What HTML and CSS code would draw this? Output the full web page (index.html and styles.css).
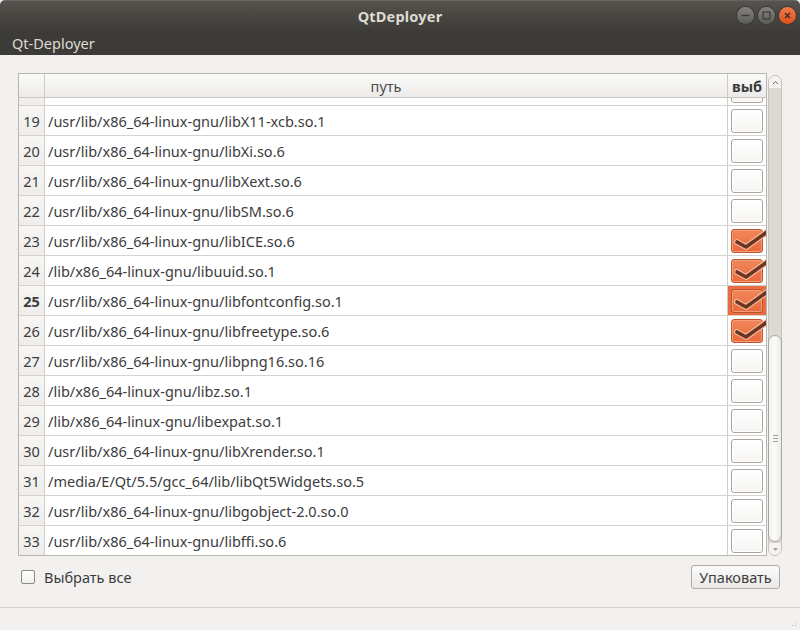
FILE: index.html
```html
<!DOCTYPE html>
<html lang="ru">
<head>
<meta charset="utf-8">
<title>QtDeployer</title>
<link rel="stylesheet" href="styles.css">
</head>
<body>
<div class="window">
  <div class="titlebar">
    <div></div>
    <div class="title">QtDeployer</div>
    <div class="wbtns">
      <span class="wbtn"><svg width="17" height="17" viewBox="0 0 17 17"><line x1="4.5" y1="8.5" x2="12.5" y2="8.5" stroke="#3a3935" stroke-width="1.3"/></svg></span>
      <span class="wbtn"><svg width="17" height="17" viewBox="0 0 17 17"><rect x="5" y="5" width="7" height="7" fill="none" stroke="#3a3935" stroke-width="1.2"/></svg></span>
      <span class="wbtn close"><svg width="17" height="17" viewBox="0 0 17 17"><path d="M6 6 L11 11 M11 6 L6 11" stroke="#3a2a22" stroke-width="1.3"/></svg></span>
    </div>
  </div>
  <div class="menubar">Qt-Deployer</div>
  <div class="main">
    <div class="table-area">
      <div class="tableview">
        <div class="hdr">
          <div class="hcorner"></div>
          <div class="hcell">путь</div>
          <div class="hcell bold">выб</div>
        </div>
        <div class="body">
          <div class="rows">
            <div class="row first"><div class="vh"></div><div class="path"></div><div class="chk"><span class="box"></span></div></div>
            <div class="row"><div class="vh">19</div><div class="path">/usr/lib/x86_64-linux-gnu/libX11-xcb.so.1</div><div class="chk"><span class="box"></span></div></div>
            <div class="row"><div class="vh">20</div><div class="path">/usr/lib/x86_64-linux-gnu/libXi.so.6</div><div class="chk"><span class="box"></span></div></div>
            <div class="row"><div class="vh">21</div><div class="path">/usr/lib/x86_64-linux-gnu/libXext.so.6</div><div class="chk"><span class="box"></span></div></div>
            <div class="row"><div class="vh">22</div><div class="path">/usr/lib/x86_64-linux-gnu/libSM.so.6</div><div class="chk"><span class="box"></span></div></div>
            <div class="row"><div class="vh">23</div><div class="path">/usr/lib/x86_64-linux-gnu/libICE.so.6</div><div class="chk"><span class="box on"><svg class="tick" width="40" height="26" viewBox="0 0 40 26"><path d="M6 13 L15 18 L36 3" fill="none" stroke="#f6b89c" stroke-width="6" stroke-linecap="round" stroke-linejoin="round"/><path d="M6 13 L15 18 L36 3" fill="none" stroke="#6c3522" stroke-width="3.6" stroke-linecap="round" stroke-linejoin="round"/></svg></span></div></div>
            <div class="row"><div class="vh">24</div><div class="path">/lib/x86_64-linux-gnu/libuuid.so.1</div><div class="chk"><span class="box on"><svg class="tick" width="40" height="26" viewBox="0 0 40 26"><path d="M6 13 L15 18 L36 3" fill="none" stroke="#f6b89c" stroke-width="6" stroke-linecap="round" stroke-linejoin="round"/><path d="M6 13 L15 18 L36 3" fill="none" stroke="#6c3522" stroke-width="3.6" stroke-linecap="round" stroke-linejoin="round"/></svg></span></div></div>
            <div class="row"><div class="vh cur">25</div><div class="path">/usr/lib/x86_64-linux-gnu/libfontconfig.so.1</div><div class="chk current"><span class="box on"><svg class="tick" width="40" height="26" viewBox="0 0 40 26"><path d="M6 13 L15 18 L36 3" fill="none" stroke="#f6b89c" stroke-width="6" stroke-linecap="round" stroke-linejoin="round"/><path d="M6 13 L15 18 L36 3" fill="none" stroke="#6c3522" stroke-width="3.6" stroke-linecap="round" stroke-linejoin="round"/></svg></span></div></div>
            <div class="row"><div class="vh">26</div><div class="path">/usr/lib/x86_64-linux-gnu/libfreetype.so.6</div><div class="chk"><span class="box on"><svg class="tick" width="40" height="26" viewBox="0 0 40 26"><path d="M6 13 L15 18 L36 3" fill="none" stroke="#f6b89c" stroke-width="6" stroke-linecap="round" stroke-linejoin="round"/><path d="M6 13 L15 18 L36 3" fill="none" stroke="#6c3522" stroke-width="3.6" stroke-linecap="round" stroke-linejoin="round"/></svg></span></div></div>
            <div class="row"><div class="vh">27</div><div class="path">/usr/lib/x86_64-linux-gnu/libpng16.so.16</div><div class="chk"><span class="box"></span></div></div>
            <div class="row"><div class="vh">28</div><div class="path">/lib/x86_64-linux-gnu/libz.so.1</div><div class="chk"><span class="box"></span></div></div>
            <div class="row"><div class="vh">29</div><div class="path">/lib/x86_64-linux-gnu/libexpat.so.1</div><div class="chk"><span class="box"></span></div></div>
            <div class="row"><div class="vh">30</div><div class="path">/usr/lib/x86_64-linux-gnu/libXrender.so.1</div><div class="chk"><span class="box"></span></div></div>
            <div class="row"><div class="vh">31</div><div class="path">/media/E/Qt/5.5/gcc_64/lib/libQt5Widgets.so.5</div><div class="chk"><span class="box"></span></div></div>
            <div class="row"><div class="vh">32</div><div class="path">/usr/lib/x86_64-linux-gnu/libgobject-2.0.so.0</div><div class="chk"><span class="box"></span></div></div>
            <div class="row"><div class="vh">33</div><div class="path">/usr/lib/x86_64-linux-gnu/libffi.so.6</div><div class="chk"><span class="box"></span></div></div>
          </div>
        </div>
      </div>
      <div class="scrollbar">
        <div class="arrow up"><svg width="7" height="5" viewBox="0 0 7 5"><path d="M1 4 L3.5 1.5 L6 4" fill="none" stroke="#6a6660" stroke-width="1"/></svg></div>
        <div class="trough">
          <div class="thumb"><span class="grip"></span></div>
        </div>
        <div class="arrow down"><svg width="7" height="5" viewBox="0 0 7 5"><path d="M1 1 L6 1 L3.5 4 Z" fill="#a8a49e"/></svg></div>
      </div>
    </div>
    <div class="bottom">
      <label class="selall"><span class="cb"></span><span>Выбрать все</span></label>
      <button class="pack">Упаковать</button>
    </div>
  </div>
  <div class="statusbar"><span class="grip-corner"></span></div>
</div>
</body>
</html>
```

FILE: styles.css
```css
* { box-sizing: border-box; }
html, body { margin: 0; padding: 0; }
body {
  width: 800px;
  height: 630px;
  overflow: hidden;
  background: #f2f1f0;
  font-family: "Noto Sans", "DejaVu Sans", sans-serif;
  font-size: 14.5px;
  color: #3c3c3c;
}
.window {
  display: flex;
  flex-direction: column;
  height: 630px;
}
.titlebar {
  height: 30px;
  background: linear-gradient(#56544f 0%, #4a4843 45%, #3e3d39 100%);
  border-top: 1px solid #67655f;
  border-radius: 5px 5px 0 0;
  display: grid;
  grid-template-columns: 1fr auto 1fr;
  align-items: center;
}
.title {
  color: #dfdbd2;
  font-weight: bold;
  font-size: 14.5px;
  letter-spacing: 0.2px;
}
.wbtns {
  display: flex;
  justify-content: flex-end;
  gap: 4px;
  padding-right: 4px;
}
.wbtn {
  width: 17px;
  height: 17px;
  border-radius: 50%;
  background: linear-gradient(#85837d, #5d5b56);
  box-shadow: 0 0 0 1px #3a3935;
  display: flex;
}
.wbtn.close {
  background: linear-gradient(#f27a4e, #de4f1f);
}
.menubar {
  height: 25px;
  background: #3c3b37;
  color: #dfdbd2;
  padding-left: 12px;
  display: flex;
  align-items: center;
}
.main {
  padding: 18px 18px 0 18px;
  display: flex;
  flex-direction: column;
}
.table-area {
  display: flex;
  height: 483px;
  gap: 1px;
}
.tableview {
  width: 750px;
  height: 483px;
  border: 1px solid #b9b5af;
  background: #fff;
  display: flex;
  flex-direction: column;
}
.hdr {
  height: 24px;
  display: grid;
  grid-template-columns: 26px 683px 1fr;
  border-bottom: 1px solid #c9c5bf;
  background: linear-gradient(#fbfbfa, #edebe9);
}
.hcorner, .hcell {
  border-right: 1px solid #cfccc7;
}
.hcell {
  display: flex;
  align-items: center;
  justify-content: center;
  color: #4c4c4c;
}
.hcell.bold {
  font-weight: bold;
  color: #3c3c3c;
  border-right: none;
  justify-content: flex-start;
  padding-left: 4px;
  overflow: hidden;
}
.body {
  flex: 1;
  overflow: hidden;
}
.row {
  height: 30px;
  display: grid;
  grid-template-columns: 26px 683px 1fr;
  border-bottom: 1px solid #d6d3ce;
}
.row.first { margin-top: -22px; }
.vh {
  background: linear-gradient(#f7f6f5, #eeedeb);
  border-right: 1px solid #d0cdc8;
  display: flex;
  align-items: center;
  justify-content: center;
  color: #3c3c3c;
}
.vh.cur { font-weight: bold; }
.path {
  border-right: 1px solid #d0cdc8;
  display: flex;
  align-items: center;
  padding-left: 3px;
  white-space: nowrap;
}
.chk {
  padding: 3px 0 0 3px;
}
.chk.current {
  background: #eb6d3f;
}
.box {
  display: block;
  position: relative;
  width: 32px;
  height: 24px;
  border: 1px solid #aaa59f;
  border-radius: 3px;
  background: linear-gradient(#ffffff, #f6f5f4);
  box-shadow: inset 0 0 0 1px #ffffff;
}
.box.on {
  border-color: #b9552f;
  background: linear-gradient(#f2875a, #e9683b);
  box-shadow: inset 0 0 0 1px #f49d78;
}
.tick {
  position: absolute;
  left: -1px;
  top: -1px;
  overflow: visible;
}
.scrollbar {
  width: 14px;
  margin-top: 2px;
  height: 481px;
  border: 1px solid #c6c2bc;
  border-radius: 7px;
  background: #dcd9d4;
  display: flex;
  flex-direction: column;
}
.arrow {
  height: 12px;
  display: flex;
  align-items: center;
  justify-content: center;
  background: #f4f3f2;
}
.arrow.up { border-radius: 6px 6px 0 0; }
.arrow.down { border-radius: 0 0 6px 6px; }
.trough {
  flex: 1;
  display: flex;
  flex-direction: column;
}
.thumb {
  margin-top: 247px;
  height: 207px;
  margin-left: -1px;
  margin-right: -1px;
  border: 1px solid #a9a59f;
  border-radius: 7px;
  background: linear-gradient(90deg, #f4f3f1, #fbfbfa 50%, #eceae7);
  display: flex;
  align-items: center;
  justify-content: center;
}
.grip {
  width: 5px;
  height: 7px;
  background: repeating-linear-gradient(#9e9a94 0 1px, transparent 1px 3px);
}
.bottom {
  height: 33px;
  padding-top: 9px;
  display: flex;
  align-items: flex-start;
  justify-content: space-between;
}
.selall {
  display: flex;
  align-items: center;
  gap: 9px;
  padding-left: 3px;
  height: 24px;
  color: #3c3c3c;
}
.cb {
  width: 14px;
  height: 14px;
  border: 1px solid #8e8a84;
  border-radius: 2px;
  background: linear-gradient(#ffffff, #f1f0ee);
}
.pack {
  width: 89px;
  height: 24px;
  margin-right: 2px;
  border: 1px solid #aea9a3;
  border-radius: 3px;
  background: linear-gradient(#fbfbfb, #ebe9e6);
  font-family: inherit;
  font-size: 14.5px;
  color: #3c3c3c;
  padding: 0;
}
.statusbar {
  margin-top: auto;
  height: 23px;
  border-top: 1px solid #d7d4cf;
  display: flex;
  justify-content: flex-end;
  align-items: flex-end;
}
.grip-corner {
  width: 10px;
  height: 10px;
  margin: 0 2px 2px 0;
  background: radial-gradient(circle, #b9b5af 0.8px, transparent 1px) 0 0 / 3px 3px;
  clip-path: polygon(100% 0, 100% 100%, 0 100%);
}
```
